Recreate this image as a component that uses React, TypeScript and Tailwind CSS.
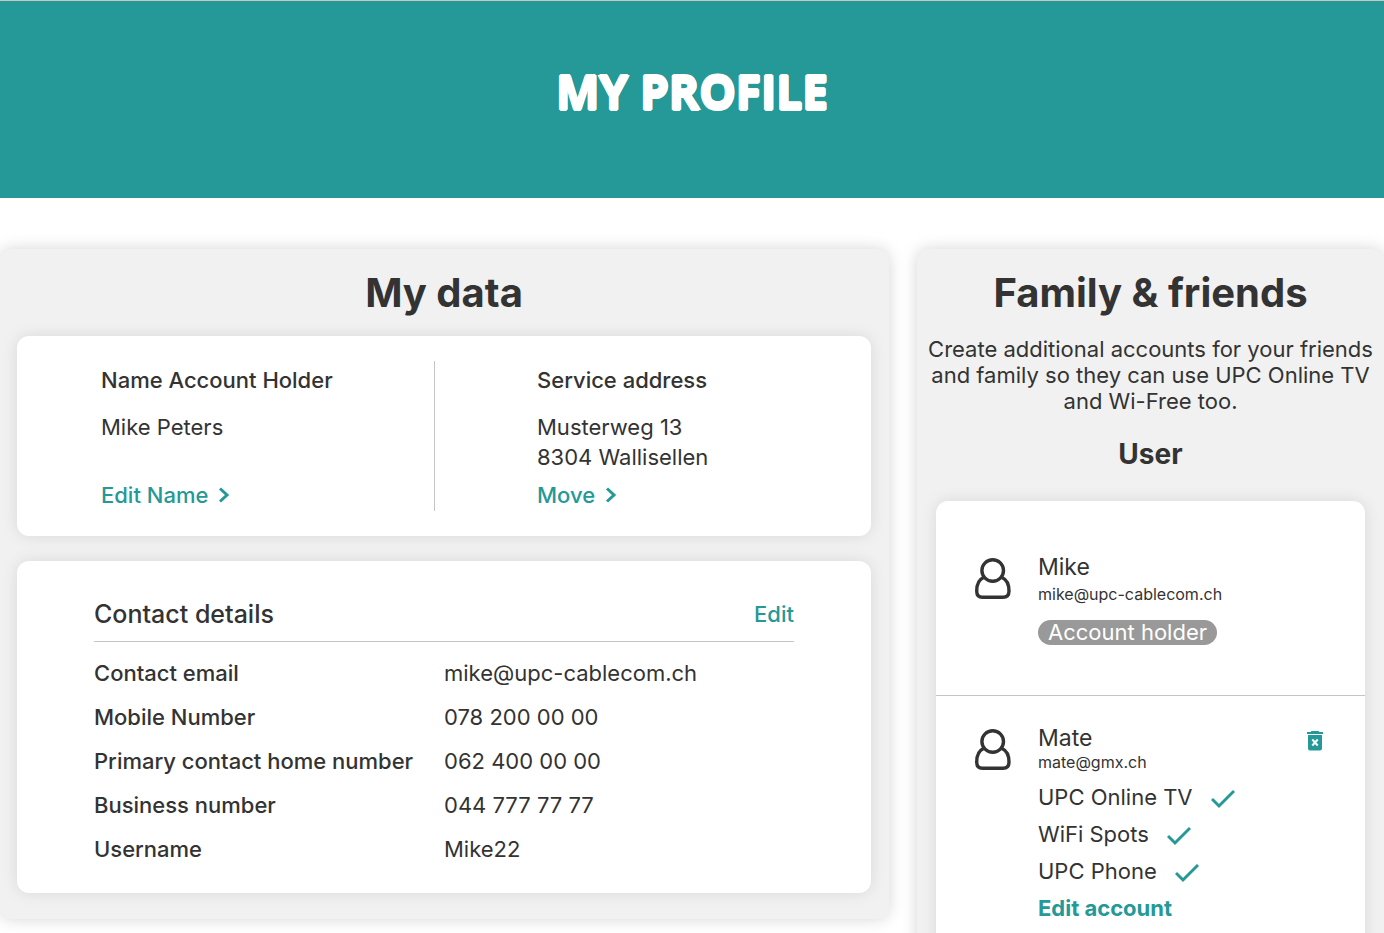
import React from 'react';

interface ContactRow {
  label: string;
  value: string;
}

const CONTACT_ROWS: ContactRow[] = [
  { label: 'Contact email', value: 'mike@upc-cablecom.ch' },
  { label: 'Mobile Number', value: '078 200 00 00' },
  { label: 'Primary contact home number', value: '062 400 00 00' },
  { label: 'Business number', value: '044 777 77 77' },
  { label: 'Username', value: 'Mike22' },
];

const SERVICES = ['UPC Online TV', 'WiFi Spots', 'UPC Phone'];

const ChevronIcon: React.FC = () => (
  <svg className="h-4 w-3" viewBox="0 0 12 16" fill="none" stroke="currentColor" strokeWidth="3">
    <path d="M2 1.500l7 6.500-7 6.500" />
  </svg>
);

const UserIcon: React.FC = () => (
  <svg className="h-11 w-10 shrink-0" viewBox="0 0 40 44" fill="none" stroke="currentColor" strokeWidth="3.400">
    <circle cx="18.700" cy="13.500" r="10.800" />
    <path d="M9.500 20.500C5 22.500 2.700 28 2.700 34C2.700 38.500 4.700 40.300 8.500 40.300H29C33 40.300 35 38.500 35 34C35 28 32.500 22.500 28 20.500" />
  </svg>
);

const CheckIcon: React.FC = () => (
  <svg className="mt-1 h-5 w-6" viewBox="0 0 24 20" fill="none" stroke="currentColor" strokeWidth="3">
    <path d="M1 10l7 7L23 2" />
  </svg>
);

const TrashIcon: React.FC = () => (
  <svg className="h-5 w-4" viewBox="0 0 16 20" fill="currentColor">
    <path d="M4.500 0h7l1 1H16v2H0V1h3.500z" />
    <path d="M1 4h14v13.500a2 2 0 0 1-2 2H3a2 2 0 0 1-2-2z" />
    <path d="M5.300 8.500l5.400 6M10.700 8.500l-5.400 6" stroke="#fff" strokeWidth="2" />
  </svg>
);

const Panel: React.FC<{ title: string; className: string; children: React.ReactNode }> = ({ title, className, children }) => (
  <section className={`bg-[#f1f1f1] rounded-xl pt-5 shadow-[0_0_16px_rgba(0,0,0,0.17)] ${className}`}>
    <h2 className="text-center text-[40px] leading-[48px] font-bold">{title}</h2>
    {children}
  </section>
);

const Card: React.FC<{ className: string; children: React.ReactNode }> = ({ className, children }) => (
  <div className={`bg-white rounded-xl shadow-[0_0_16px_rgba(0,0,0,0.1)] ${className}`}>{children}</div>
);

const App: React.FC = () => {
  return (
    <div className="h-screen overflow-hidden bg-white text-[#333] text-[22px] leading-[30px] font-['Inter',sans-serif]">
      <header className="flex h-[198px] items-center justify-center border-t border-[#c8c8c8] bg-[#249998] pb-[18px]">
        {/* outline plus shadows round off and thicken the letters */}
        <h1 className="font-['Open_Sans',sans-serif] text-[46px] leading-[60px] font-bold text-white [-webkit-text-stroke:2px_#fff] [text-shadow:1px_0_#fff,-1px_0_#fff,0_2px_#fff,0_-2px_#fff]">
          MY PROFILE
        </h1>
      </header>

      <main className="mt-[51px] grid grid-cols-[889fr_467fr] items-start gap-7">
        <Panel title="My data" className="pr-[18px] pl-[17px] pb-[26px]">
          <Card className="mt-[19px] grid grid-cols-[418fr_436fr] py-[25px]">
            <div className="h-[150px] border-r border-[#c4c4c4] pl-[84px]">
              <h3 className="pt-1 font-medium">Name Account Holder</h3>
              <p className="mt-[17px] h-[60px]">Mike Peters</p>
              <a href="#name" className="mt-2 inline-flex items-center gap-[10px] font-medium text-[#249998]">
                Edit Name <ChevronIcon />
              </a>
            </div>
            <div className="pl-[102px]">
              <h3 className="pt-1 font-medium">Service address</h3>
              <p className="mt-[17px] h-[60px]">
                Musterweg 13
                <br />
                8304 Wallisellen
              </p>
              <a href="#move" className="mt-2 inline-flex items-center gap-[10px] font-medium text-[#249998]">
                Move <ChevronIcon />
              </a>
            </div>
          </Card>

          <Card className="mt-[25px] px-[77px] pt-[38px] pb-[22px]">
            <div className="flex items-center justify-between border-b border-[#c4c4c4] pb-3">
              <h3 className="text-[25px] leading-[30px] font-medium">Contact details</h3>
              <a href="#contact" className="font-medium text-[#249998]">Edit</a>
            </div>
            <dl className="mt-[9px]">
              {CONTACT_ROWS.map((row) => (
                <div key={row.label} className="grid h-11 grid-cols-2 items-center">
                  <dt className="font-medium whitespace-nowrap">{row.label}</dt>
                  <dd>{row.value}</dd>
                </div>
              ))}
            </dl>
          </Card>
        </Panel>

        <Panel title="Family & friends" className="min-h-[760px]">
          <p className="mt-[19px] px-1 text-center leading-[26px]">
            Create additional accounts for your friends and family so they can use UPC Online TV and Wi-Free too.
          </p>
          <h3 className="mt-[22px] text-center text-[28px] leading-9 font-bold">User</h3>
          <Card className="mx-[19px] mt-[29px] min-h-[500px]">
            <div className="flex h-[195px] gap-6 border-b border-[#c4c4c4] px-[38px] pt-[51px]">
              <div className="pt-[5px]"><UserIcon /></div>
              <div>
                <h4 className="text-[23px] leading-[30px]">Mike</h4>
                <p className="text-base leading-6">mike@upc-cablecom.ch</p>
                <span className="mt-[14px] inline-block rounded-full bg-[#999] px-[10px] leading-[25px] text-white">
                  Account holder
                </span>
              </div>
            </div>
            <div className="flex gap-6 px-[38px] pt-[27px]">
              <div className="pt-[5px]"><UserIcon /></div>
              <div className="grow">
                <h4 className="text-[23px] leading-[30px]">Mate</h4>
                <p className="text-base leading-[18px]">mate@gmx.ch</p>
                <ul className="mt-[7px]">
                  {SERVICES.map((service) => (
                    <li key={service} className="flex h-[37px] items-center gap-[18px]">
                      {service}
                      <span className="text-[#249998]"><CheckIcon /></span>
                    </li>
                  ))}
                </ul>
                <a href="#account" className="mt-1 block font-bold text-[#249998]">Edit account</a>
              </div>
              <button type="button" aria-label="Delete Mate" className="mt-2 mr-1 h-5 text-[#249998]">
                <TrashIcon />
              </button>
            </div>
          </Card>
        </Panel>
      </main>
    </div>
  );
};

export default App;
